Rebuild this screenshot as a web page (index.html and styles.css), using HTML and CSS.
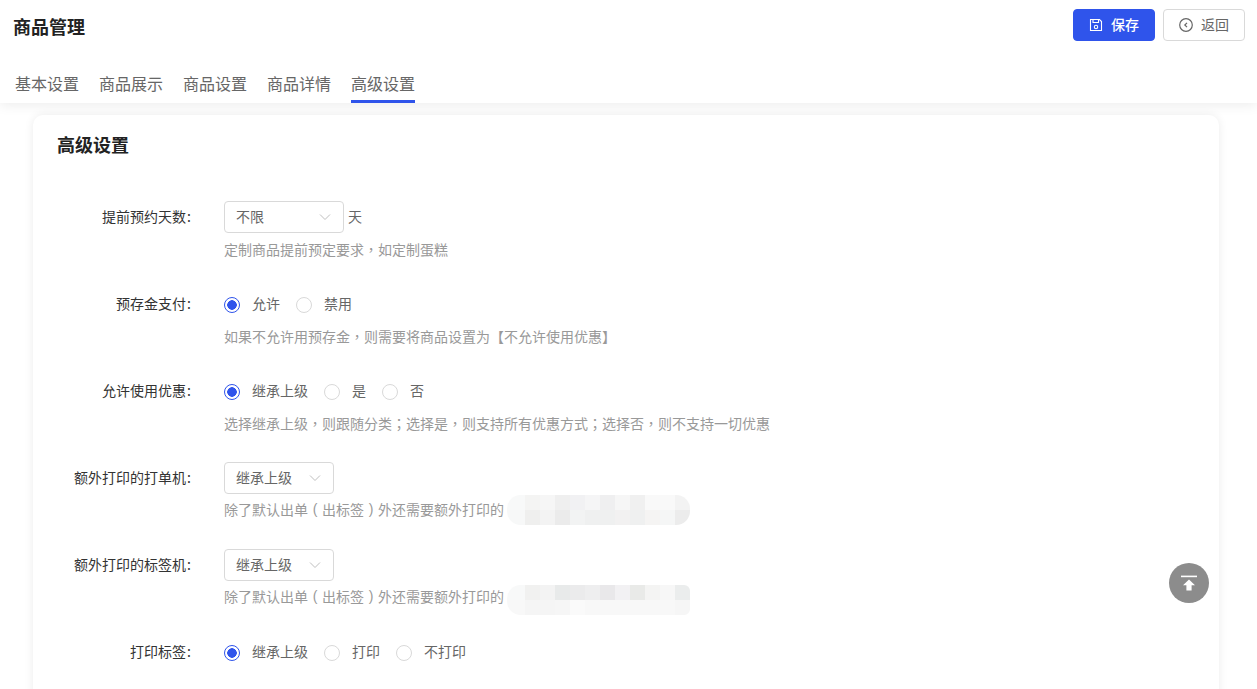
FILE: index.html
```html
<!DOCTYPE html>
<html lang="zh-CN">
<head>
<meta charset="utf-8">
<title>商品管理</title>
<link rel="stylesheet" href="styles.css">
</head>
<body>
<div class="page">
  <header class="header">
    <div class="top">
      <h1 class="page-title">商品管理</h1>
      <div class="actions">
        <button class="btn btn-primary">
          <svg class="btn-icon" viewBox="0 0 14 14" fill="none" stroke="currentColor" stroke-width="1.1"><path d="M1.5 1.5h9l2 2v9h-11z"/><path d="M4 1.5v3h5.5v-3"/><circle cx="7" cy="9" r="1.7"/></svg>
          <span class="btn-text">保存</span>
        </button>
        <button class="btn btn-default">
          <svg class="btn-icon" viewBox="0 0 14 14" fill="none" stroke="currentColor" stroke-width="1.2"><circle cx="7" cy="7" r="6.3"/><path d="M8 4.8 5.8 7 8 9.2"/></svg>
          <span class="btn-text">返回</span>
        </button>
      </div>
    </div>
    <nav class="tabs">
      <a class="tab">基本设置</a>
      <a class="tab">商品展示</a>
      <a class="tab">商品设置</a>
      <a class="tab">商品详情</a>
      <a class="tab tab-active">高级设置</a>
    </nav>
  </header>
  <main class="content">
    <section class="card">
      <h2 class="card-title">高级设置</h2>
      <div class="form">
        <div class="item">
          <label class="label">提前预约天数<span class="colon">:</span></label>
          <div class="field">
            <div class="control">
              <div class="select select-wide"><span class="select-text">不限</span><svg class="arrow" viewBox="0 0 12 8" fill="none" stroke="currentColor"><path d="M1 1.5l5 5 5-5"/></svg></div>
              <span class="unit">天</span>
            </div>
            <p class="help">定制商品提前预定要求<span class="punct">，</span>如定制蛋糕</p>
          </div>
        </div>
        <div class="item">
          <label class="label">预存金支付<span class="colon">:</span></label>
          <div class="field">
            <div class="control radios">
              <span class="radio radio-on"></span><span class="radio-text">允许</span>
              <span class="radio"></span><span class="radio-text">禁用</span>
            </div>
            <p class="help">如果不允许用预存金<span class="punct">，</span>则需要将商品设置为【不允许使用优惠】</p>
          </div>
        </div>
        <div class="item">
          <label class="label">允许使用优惠<span class="colon">:</span></label>
          <div class="field">
            <div class="control radios">
              <span class="radio radio-on"></span><span class="radio-text">继承上级</span>
              <span class="radio"></span><span class="radio-text">是</span>
              <span class="radio"></span><span class="radio-text">否</span>
            </div>
            <p class="help">选择继承上级<span class="punct">，</span>则跟随分类<span class="punct">；</span>选择是<span class="punct">，</span>则支持所有优惠方式<span class="punct">；</span>选择否<span class="punct">，</span>则不支持一切优惠</p>
          </div>
        </div>
        <div class="item">
          <label class="label">额外打印的打单机<span class="colon">:</span></label>
          <div class="field">
            <div class="control">
              <div class="select"><span class="select-text">继承上级</span><svg class="arrow" viewBox="0 0 12 8" fill="none" stroke="currentColor"><path d="M1 1.5l5 5 5-5"/></svg></div>
            </div>
            <p class="help help-tight">除了默认出单<span class="paren">(</span>出标签<span class="paren">)</span>外还需要额外打印的<span class="blur blur-a"></span></p>
          </div>
        </div>
        <div class="item">
          <label class="label">额外打印的标签机<span class="colon">:</span></label>
          <div class="field">
            <div class="control">
              <div class="select"><span class="select-text">继承上级</span><svg class="arrow" viewBox="0 0 12 8" fill="none" stroke="currentColor"><path d="M1 1.5l5 5 5-5"/></svg></div>
            </div>
            <p class="help help-tight">除了默认出单<span class="paren">(</span>出标签<span class="paren">)</span>外还需要额外打印的<span class="blur blur-b"></span></p>
          </div>
        </div>
        <div class="item">
          <label class="label">打印标签<span class="colon">:</span></label>
          <div class="field">
            <div class="control radios">
              <span class="radio radio-on"></span><span class="radio-text">继承上级</span>
              <span class="radio"></span><span class="radio-text">打印</span>
              <span class="radio"></span><span class="radio-text">不打印</span>
            </div>
          </div>
        </div>
      </div>
    </section>
  </main>
  <button class="to-top" aria-label="回到顶部">
    <svg viewBox="0 0 16 16" fill="#fff"><rect x="0" y="0.6" width="16" height="1.6"/><path d="M8 4.6 14 10.2H10.6V15.6H5.4V10.2H2z"/></svg>
  </button>
</div>
</body>
</html>
```
FILE: styles.css
```css
* { box-sizing: border-box; }
html, body { margin: 0; height: 100%; }
body {
  font-family: "Noto Sans CJK SC", "Liberation Sans", sans-serif;
  font-size: 14px;
  color: #333;
  background: #fff;
  overflow: hidden;
}
.page { position: relative; height: 689px; overflow: hidden; display: flex; flex-direction: column; }
.header {
  position: relative;
  z-index: 1;
  height: 103px;
  flex: none;
  background: #fff;
  box-shadow: 0 2px 12px rgba(0, 0, 0, .08);
  padding: 9px 12px 0 13px;
}
.top { display: flex; justify-content: space-between; align-items: flex-start; height: 48px; }
.page-title { margin: 0; font-size: 18px; line-height: 34px; font-weight: 700; color: #222; }
.actions { display: flex; gap: 8px; }
.btn {
  width: 82px;
  height: 32px;
  display: flex;
  align-items: center;
  justify-content: center;
  gap: 8px;
  border-radius: 4px;
  font: inherit;
  padding: 0;
}
.btn-text { padding-bottom: 2px; }
.btn-icon { width: 14px; height: 14px; flex: none; }
.btn-primary { background: #2f54eb; border: 1px solid #2f54eb; color: #fff; font-weight: 500; }
.btn-default { background: #fff; border: 1px solid #d9d9d9; color: #666; }
.tabs { display: flex; gap: 20px; padding-left: 2px; height: 46px; }
.tab {
  height: 46px;
  font-size: 16px;
  line-height: 52px;
  color: #666;
}
.tab-active { border-bottom: 3px solid #2f54eb; }
.content { flex: 1; padding: 12px 38px 0 33px; background: #fff; min-height: 0; }
.card {
  background: #fff;
  border-radius: 10px;
  box-shadow: 0 0 10px rgba(0, 0, 0, .08);
  padding: 16px 24px 0;
  height: 700px;
}
.card-title { margin: 0; font-size: 18px; line-height: 26px; font-weight: 700; color: #222; }
.form { margin-top: 44px; }
.item { display: flex; height: 87px; }
.label {
  width: 135px;
  flex: none;
  margin-right: 32px;
  text-align: right;
  line-height: 30px;
  color: #333;
  white-space: nowrap;
}
.colon { display: inline-block; width: 6px; text-align: center; }
.field { flex: 1; min-width: 0; }
.control { display: flex; align-items: center; height: 32px; }
.select {
  width: 110px;
  height: 32px;
  border: 1px solid #d9d9d9;
  border-radius: 4px;
  padding: 0 12px 0 11px;
  display: flex;
  align-items: center;
  justify-content: space-between;
  color: #666;
}
.select-text { padding-bottom: 2px; }
.select-wide { width: 120px; }
.arrow { width: 12px; height: 8px; color: #bfbfbf; flex: none; }
.unit { margin-left: 4px; padding-bottom: 2px; color: #666; }
.radio {
  width: 16px;
  height: 16px;
  flex: none;
  margin: 2px 12px 0 0;
  border: 1px solid #d9d9d9;
  border-radius: 50%;
  background: #fff;
}
.radio-on { border-color: #2f54eb; background: radial-gradient(circle, #2f54eb 0 4.5px, #fff 5px); }
.radio-text { margin-right: 16px; padding-bottom: 2px; color: #666; }
.help { margin: 6px 0 0; height: 20px; line-height: 20px; color: #999; white-space: nowrap; display: flex; align-items: flex-start; }
.help-tight { margin-top: 5px; }
.punct { font-family: "Noto Sans CJK TC", sans-serif; }
.paren { display: inline-block; width: 14px; text-align: center; font-family: "Liberation Sans", sans-serif; }
.blur {
  width: 183px;
  height: 30px;
  flex: none;
  margin-left: 3px;
  border-radius: 14px;
}
.blur-a {
  margin-top: -4px;
  background:
    linear-gradient(90deg, #f8f9f9 0 18px, #f4f4f3 18px 33px, #f6f6f6 33px 48px, #efefef 48px 63px, #f1f1f3 63px 78px, #f5f5f6 78px 93px, #efeff0 93px 108px, #f6f6f6 108px 123px, #f0f0f0 123px 138px, #f9f9f9 138px 168px, #f3f3f3 168px) top / 100% 15px no-repeat,
    linear-gradient(90deg, #f7f8f8 0 18px, #efefee 18px 33px, #f3f3f3 33px 48px, #ebebeb 48px 63px, #f2f3f3 63px 78px, #eff0f0 78px 108px, #f2f1f1 108px 123px, #eff0f0 123px 138px, #f5f4f3 138px 153px, #f5f6f6 153px 168px, #ececec 168px) bottom / 100% 15px no-repeat;
}
.blur-b {
  margin-top: -1px;
  border-radius: 14px 6px 6px 14px;
  background:
    linear-gradient(90deg, #f8f9f9 0 18px, #f1f1f0 18px 33px, #f3f3f3 33px 48px, #e8eaea 48px 63px, #ebebec 63px 78px, #eeeeef 78px 93px, #e9e8ea 93px 108px, #f2f1f3 108px 123px, #e9eae8 123px 138px, #f4f4f3 138px 153px, #f7f7f7 153px 168px, #ebeded 168px) top / 100% 15px no-repeat,
    linear-gradient(90deg, #f8f8f8 0 18px, #f5f5f5 18px 48px, #f6f6f6 48px 63px, #fafafa 63px 78px, #f8f8f8 78px 168px, #f6f6f6 168px) bottom / 100% 15px no-repeat;
}
.to-top {
  position: absolute;
  left: 1169px;
  top: 563px;
  width: 40px;
  height: 40px;
  padding: 0;
  border: 0;
  border-radius: 50%;
  background: #8c8c8c;
  display: flex;
  align-items: center;
  justify-content: center;
}
.to-top svg { width: 16px; height: 16px; }
```
